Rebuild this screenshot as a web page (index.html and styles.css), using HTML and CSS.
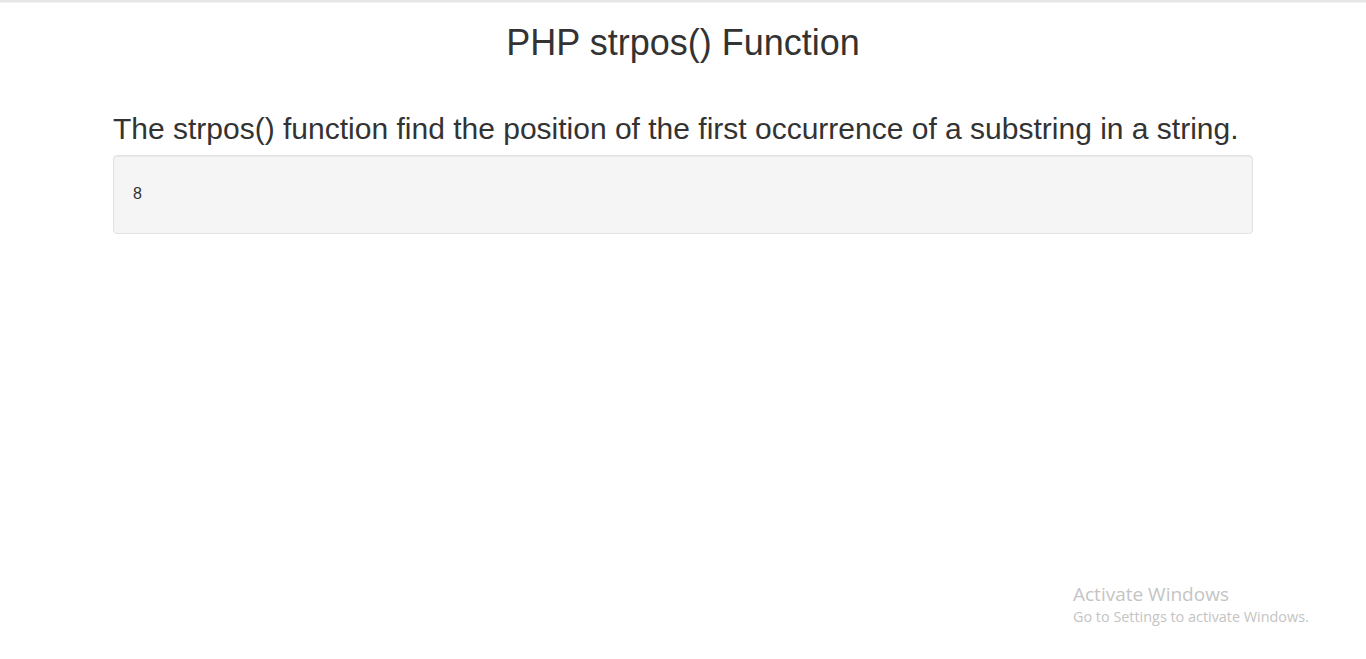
FILE: index.html
```html
<!DOCTYPE html>
<html>
<head>
<meta charset="utf-8">
<link rel="stylesheet" href="styles.css">
</head>
<body>
<div class="topline"></div>
<div class="container">
  <h1 class="title">PHP strpos() Function</h1>
  <h3 class="lead">The strpos() function find the position of the first occurrence of a substring in a string.</h3>
  <div class="well">8</div>
</div>
<div class="watermark">
  <div class="wm-title">Activate Windows</div>
  <div class="wm-sub">Go to Settings to activate Windows.</div>
</div>
</body>
</html>
```
FILE: styles.css
```css
html, body {
  margin: 0;
  padding: 0;
  background: #fff;
}
body {
  font-family: "Liberation Sans", Arial, sans-serif;
  color: #333;
  font-size: 14px;
  line-height: 1.42857;
  height: 659px;
  position: relative;
  overflow: hidden;
}
.topline {
  height: 2px;
  background: #e6e6e6;
  border-bottom: 1px solid #f3f3f3;
}
.container {
  width: 1140px;
  margin: 0 auto;
  padding: 0 15px;
}
.title {
  font-size: 36px;
  font-weight: 500;
  line-height: 1.1;
  text-align: center;
  margin: 20px 0 0;
}
.lead {
  font-size: 30px;
  font-weight: 500;
  line-height: 33px;
  margin: 49px 0 10px;
}
.well {
  height: 39px;
  padding: 19px;
  background: #f5f5f5;
  border: 1px solid #e3e3e3;
  border-radius: 4px;
  box-shadow: inset 0 1px 1px rgba(0,0,0,.05);
  font-size: 16px;
  line-height: 38px;
}
.watermark {
  position: absolute;
  left: 1073px;
  top: 581px;
  font-family: "Open Sans", "Noto Sans", sans-serif;
  color: #c4c4c4;
}
.wm-title {
  font-size: 19px;
  line-height: 26px;
}
.wm-sub {
  font-size: 14.4px;
  line-height: 20px;
}
```
